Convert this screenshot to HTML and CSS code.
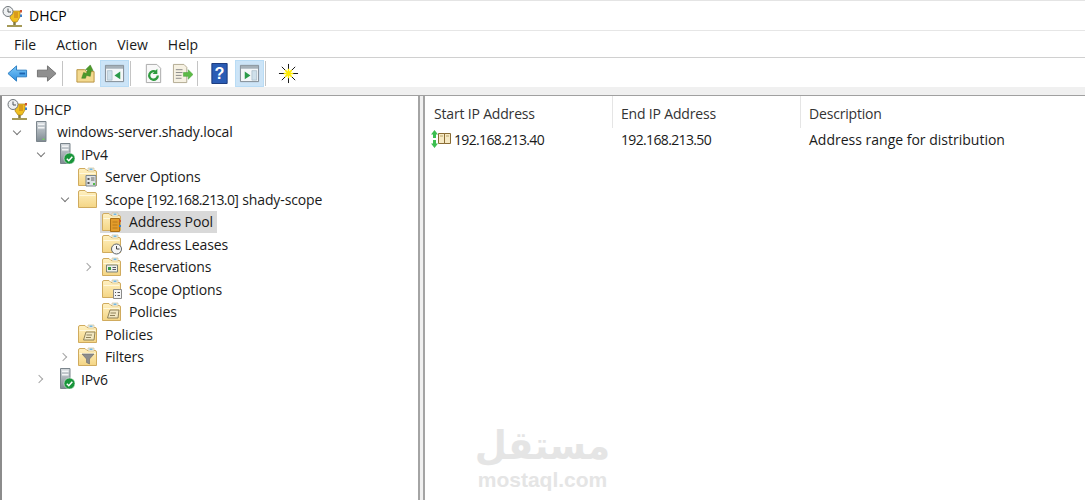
FILE: index.html
```html
<!DOCTYPE html>
<html lang="en">
  <head>
    <meta charset="UTF-8" />
    <meta name="viewport" content="width=device-width, initial-scale=1.0" />
    <title>DHCP</title>
    <link rel="stylesheet" href="styles.css">
  </head>
  <body>
    <svg class="defs" width="0" height="0">
      <defs>
        <linearGradient id="foldfill" x1="0" y1="0" x2="0" y2="1">
          <stop offset="0" stop-color="#fff1c2"/>
          <stop offset="1" stop-color="#f4d584"/>
        </linearGradient>
        <linearGradient id="towerfill" x1="0" y1="0" x2="0" y2="1">
          <stop offset="0" stop-color="#d4d9dd"/>
          <stop offset="1" stop-color="#7f8a92"/>
        </linearGradient>
        <linearGradient id="backfill" x1="0" y1="0" x2="0" y2="1">
          <stop offset="0" stop-color="#7cc8f8"/>
          <stop offset="1" stop-color="#2f8fe0"/>
        </linearGradient>
        <g id="folder">
          <path d="M.5 18.500V3q0-1.500 1.500-1.500h5l2 2h8q1.500 0 1.500 1.500v13.500z" fill="url(#foldfill)" stroke="#d0ab5e"/>
          <path d="M1.500 6.500h16" stroke="#fff8dd"/>
        </g>
        <g id="folder-tab">
          <use href="#folder"/>
          <path d="M10 1h6v3h-6z" fill="#f7f4e6" stroke="#c9b98a" stroke-width=".6"/>
          <path d="M11.500 1.500h3v1.500h-3z" fill="#6fb8e6"/>
        </g>
        <g id="tower">
          <path d="M6.500 -.5h9.500v20H6.500z" fill="url(#towerfill)" stroke="#7b858c"/>
          <path d="M8 1.500h6.500v1.500H8zM8 5h6.500v1.500H8z" fill="#f2f4f5"/>
          <path d="M8 9h6.500" stroke="#aab2b8"/>
          <path d="M12.500 16.500h2v1.500h-2z" fill="#74d45e"/>
        </g>
        <g id="tower-ok">
          <use href="#tower"/>
          <circle cx="15.500" cy="14.500" r="5.500" fill="#18953a" stroke="#fff" stroke-width=".5"/>
          <path d="M12.800 14.700l2 2 3.500-4" fill="none" stroke="#fff" stroke-width="1.500"/>
        </g>
        <g id="sheet">
          <path d="M8 8h9l-1 8H5.500z" fill="#f1e7c2" stroke="#8f825a"/>
          <path d="M8.500 11h5.500M8 13.500h5" stroke="#8f825a"/>
        </g>
        <g id="trophy">
          <path d="M9 5h9v6l-3 5h-4l-3-4z" fill="#f0c020" stroke="#a97f1c" stroke-width=".7"/>
          <path d="M12 6h4v6h-4z" fill="#d99a1c"/>
          <circle cx="6" cy="5.500" r="5" fill="#eef0f1" stroke="#6f757a"/>
          <path d="M6 2.500v3.500h3" fill="none" stroke="#4f5458"/>
          <path d="M18 4h2v2.500h-2z" fill="#d0552f"/>
          <path d="M18 8.500h2V11h-2z" fill="#3c7fc4"/>
          <path d="M12.500 16v3" stroke="#857a3c" stroke-width="2.500"/>
          <path d="M5 20h15" stroke="#a59a58" stroke-width="2"/>
        </g>
      </defs>
    </svg>

    <header class="titlebar">
      <svg class="ico" viewBox="0 0 19 20"><use href="#trophy"/></svg>
      <span>DHCP</span>
    </header>

    <nav class="menubar">
      <span>File</span>
      <span>Action</span>
      <span>View</span>
      <span>Help</span>
    </nav>

    <div class="toolbar">
      <button class="tool">
        <svg viewBox="0 0 22 22"><path d="M1 11l9-8v4.500h10.500v7H10V19z" fill="url(#backfill)" stroke="#2a7cc0"/><path d="M13 11h6" stroke="#1c64b0" stroke-width="2"/></svg>
      </button>
      <button class="tool">
        <svg viewBox="0 0 22 22"><path d="M21 11l-9-8v4.500H1.500v7H12V19z" fill="#8f8f8f" stroke="#707070"/></svg>
      </button>
      <i class="sep"></i>
      <button class="tool">
        <svg viewBox="0 0 22 22"><path d="M2 20V7h8l2 2h8v11z" fill="#f3d98f" stroke="#b8923f"/><path d="M7 16l2-6 3 1 1-4-2 0 5-5 3 6-2 0-1 6-4-1-1 3z" fill="#4c9a2a" stroke="#3a7a20" stroke-width=".5"/></svg>
      </button>
      <button class="tool on">
        <svg viewBox="0 0 22 22"><path d="M1.500 2.500h19v17h-19z" fill="#f4f7f9" stroke="#7d8790"/><path d="M2 3h18v3H2z" fill="#a5b0b8"/><path d="M3.500 8h5v10h-5z" fill="#cfe0ea" stroke="#8ea4b4" stroke-width=".5"/><path d="M17 9l-6 4 6 4z" fill="#2c9b4a"/></svg>
      </button>
      <i class="sep"></i>
      <button class="tool">
        <svg viewBox="0 0 22 22"><path d="M3.500 1.500h11l4 4v15h-15z" fill="#f8f8f8" stroke="#a8a8a8"/><path d="M15.500 13a4.500 4.500 0 1 1-2-3.700" fill="none" stroke="#2e9b3e" stroke-width="2.400"/><path d="M15 6v5.500h-5z" fill="#2e9b3e"/></svg>
      </button>
      <button class="tool slim">
        <svg viewBox="0 0 22 22"><path d="M1.500 1.500h11l3 3v16h-14z" fill="#f6f1e2" stroke="#b0a890"/><path d="M4 7h7M4 10h7M4 13h6M4 16h6" stroke="#888"/><path d="M12 10h5V7l5 5-5 5v-3h-5z" fill="#5cbb46" stroke="#3f9a30" stroke-width=".5"/></svg>
      </button>
      <i class="sep tight"></i>
      <button class="tool slim">
        <svg viewBox="0 0 22 22"><path d="M3 .5h16v21H3z" fill="#2a5cb4" stroke="#16357a"/><text x="11" y="17" class="help-mark">?</text></svg>
      </button>
      <button class="tool on shift">
        <svg viewBox="0 0 22 22"><path d="M1.500 2.500h19v17h-19z" fill="#f4f7f9" stroke="#7d8790"/><path d="M2 3h18v3H2z" fill="#a5b0b8"/><path d="M13.500 8h5v10h-5z" fill="#cfe0ea" stroke="#8ea4b4" stroke-width=".5"/><path d="M6 9l6 4-6 4z" fill="#2c9b4a"/></svg>
      </button>
      <i class="sep"></i>
      <button class="tool">
        <svg viewBox="0 0 22 22"><path d="M11 1v20M1 11h20M4 4l14 14M18 4L4 18" stroke="#111"/><path d="M11 6v10M6 11h10M7.500 7.500l7 7M14.500 7.500l-7 7" stroke="#ffec00" stroke-width="1.600"/></svg>
      </button>
    </div>

    <div class="strip"></div>

    <main class="panes">
      <section class="tree">
        <div class="node root">
          <div class="item">
            <svg class="ico" viewBox="0 0 19 20"><use href="#trophy"/></svg>
            <span class="label">DHCP</span>
          </div>
        </div>
        <div class="node d0">
          <span class="arrow open"></span>
          <div class="item">
            <svg class="ico" viewBox="0 0 19 20"><use href="#tower"/></svg>
            <span class="label">windows-server.shady.local</span>
          </div>
        </div>
        <div class="node d1">
          <span class="arrow open"></span>
          <div class="item">
            <svg class="ico" viewBox="0 0 19 20"><use href="#tower-ok"/></svg>
            <span class="label">IPv4</span>
          </div>
        </div>
        <div class="node d2">
          <span class="arrow"></span>
          <div class="item">
            <svg class="ico" viewBox="0 0 19 20">
              <use href="#folder-tab"/>
              <path d="M8 8.500h10v10.500H8z" fill="#dfe3e6" stroke="#7b858c"/>
              <path d="M9.500 11h2v2h-2zM9.500 15h2v2h-2z" fill="#555"/>
              <path d="M13 11h3.500M13 13h3.500" stroke="#666"/>
              <path d="M15 16h2v2h-2z" fill="#4fbb4a"/>
            </svg>
            <span class="label">Server Options</span>
          </div>
        </div>
        <div class="node d2">
          <span class="arrow open"></span>
          <div class="item">
            <svg class="ico" viewBox="0 0 19 20"><use href="#folder"/></svg>
            <span class="label">Scope [<span class="ip">192.168.213.0</span>] shady-scope</span>
          </div>
        </div>
        <div class="node d3">
          <span class="arrow"></span>
          <div class="item sel">
            <svg class="ico" viewBox="0 0 19 20">
              <use href="#folder-tab"/>
              <path d="M8.500 6.500h9v13h-9z" fill="#e39c2b" stroke="#a96f17"/>
              <path d="M10.500 10h5M10.500 13h5M10.500 16h5" stroke="#b97a1a"/>
              <path d="M17 8h2v2h-2z" fill="#cf5a2a"/>
              <path d="M17 13h2v2h-2z" fill="#3f80c8"/>
            </svg>
            <span class="label">Address Pool</span>
          </div>
        </div>
        <div class="node d3">
          <span class="arrow"></span>
          <div class="item">
            <svg class="ico" viewBox="0 0 19 20">
              <use href="#folder-tab"/>
              <circle cx="14.500" cy="15" r="5" fill="#f5f5f5" stroke="#5e6468"/>
              <path d="M14.500 12v3h3" fill="none" stroke="#444"/>
            </svg>
            <span class="label">Address Leases</span>
          </div>
        </div>
        <div class="node d3">
          <span class="arrow shut"></span>
          <div class="item">
            <svg class="ico" viewBox="0 0 19 20">
              <use href="#folder-tab"/>
              <path d="M4.500 8h11v7h-11z" fill="#eef0ea" stroke="#7c8278"/>
              <path d="M6 10h3v3H6z" fill="#3a9a48"/>
              <path d="M10.500 10.500h3.500M10.500 12.500h3.500" stroke="#556"/>
            </svg>
            <span class="label">Reservations</span>
          </div>
        </div>
        <div class="node d3">
          <span class="arrow"></span>
          <div class="item">
            <svg class="ico" viewBox="0 0 19 20">
              <use href="#folder-tab"/>
              <path d="M11.500 10.500h8v9h-8z" fill="#f4f4f4" stroke="#8a8a8a"/>
              <path d="M13 13.500h1M15.500 13.500h2.500M13 16.500h1M15.500 16.500h2.500" stroke="#555"/>
            </svg>
            <span class="label">Scope Options</span>
          </div>
        </div>
        <div class="node d3">
          <span class="arrow"></span>
          <div class="item">
            <svg class="ico" viewBox="0 0 19 20"><use href="#folder-tab"/><use href="#sheet"/></svg>
            <span class="label">Policies</span>
          </div>
        </div>
        <div class="node d2">
          <span class="arrow"></span>
          <div class="item">
            <svg class="ico" viewBox="0 0 19 20"><use href="#folder-tab"/><use href="#sheet"/></svg>
            <span class="label">Policies</span>
          </div>
        </div>
        <div class="node d2">
          <span class="arrow shut"></span>
          <div class="item">
            <svg class="ico" viewBox="0 0 19 20">
              <use href="#folder-tab"/>
              <path d="M4 7h12l-4.500 5v5l-3-1.500V12z" fill="#8d8d8d" stroke="#6a6a6a" stroke-width=".6"/>
            </svg>
            <span class="label">Filters</span>
          </div>
        </div>
        <div class="node d1">
          <span class="arrow shut"></span>
          <div class="item">
            <svg class="ico" viewBox="0 0 19 20"><use href="#tower-ok"/></svg>
            <span class="label">IPv6</span>
          </div>
        </div>
      </section>

      <section class="list">
        <div class="cols head">
          <div>Start IP Address</div>
          <div>End IP Address</div>
          <div>Description</div>
        </div>
        <div class="cols row">
          <div class="first">
            <svg class="range" viewBox="0 0 21 18">
              <path d="M3.500 0l3.500 4.500H5V8H2V4.500H0zM2 10h3v3.500h2L3.500 18 0 13.500h2z" fill="#3cbf50"/>
              <path d="M7.500 3.500h6v10h-6zM13.500 3.500h6v10h-6z" fill="#f6e9c4" stroke="#8a6c34"/>
              <path d="M9 6h3M15 6h3" stroke="#b9a26a"/>
            </svg>
            <span class="ip">192.168.213.40</span>
          </div>
          <div><span class="ip">192.168.213.50</span></div>
          <div class="desc">Address range for distribution</div>
        </div>
      </section>
    </main>

    <div class="mark">
      <div class="mark-ar" lang="ar" dir="rtl">مستقل</div>
      <div class="mark-en">mostaql.com</div>
    </div>
  </body>
</html>
```

FILE: styles.css
```css
* {
  box-sizing: border-box;
}

html,
body {
  height: 100%;
}

body {
  margin: 0;
  display: flex;
  flex-direction: column;
  overflow: hidden;
  background: #fff;
  color: #1a1a1a;
  font-family: "Open Sans", "Noto Sans", sans-serif;
  font-size: 14px;
}

.defs {
  position: absolute;
}

.titlebar {
  height: 31px;
  display: flex;
  align-items: center;
  gap: 8px;
  padding-left: 2px;
  border-top: 1px solid #e4e4e4;
  border-bottom: 1px solid #e6e6e6;
  color: #000;
}

.menubar {
  height: 27px;
  display: flex;
  align-items: center;
  gap: 20px;
  padding-left: 14px;
  border-bottom: 1px solid #d0d0d0;
}

.toolbar {
  height: 29px;
  display: flex;
  align-items: flex-end;
  padding-left: 3px;
  background: #fff;
}

.tool {
  width: 29px;
  height: 27px;
  padding: 0;
  border: 1px solid transparent;
  background: none;
  display: flex;
  align-items: center;
  justify-content: center;
}

.tool.slim {
  width: 28px;
}

.tool.on {
  background: #cce4f7;
  border-color: #b9dcf5;
}

.tool.shift {
  margin-left: 2px;
}

.tool svg {
  width: 21px;
  height: 21px;
}

.help-mark {
  fill: #fff;
  font-size: 17px;
  font-weight: 700;
  text-anchor: middle;
}

.sep {
  width: 1px;
  height: 25px;
  margin: 0 8px 1px 1px;
  background: #c4c4c4;
}

.sep.tight {
  margin-right: 7px;
}

.strip {
  height: 9px;
  background: #f0f0f0;
  border-bottom: 1px solid #a0a0a0;
}

.panes {
  flex: 1;
  display: flex;
  min-height: 0;
  background: #f0f0f0;
  border-left: 2px solid #8c8c8c;
}

.tree {
  width: 418px;
  background: #fff;
  border-right: 2px solid #a4a4a4;
  padding-top: 2px;
  letter-spacing: -0.12px;
}

.node {
  height: 22.5px;
  display: flex;
  align-items: stretch;
}

.root { padding-left: 3px; }
.d0 { padding-left: 8px; }
.d1 { padding-left: 32px; }
.d2 { padding-left: 56px; }
.d3 { padding-left: 80px; }

.arrow {
  width: 14px;
  margin-right: 4px;
  flex: none;
  position: relative;
}

.arrow.open::after,
.arrow.shut::after {
  content: "";
  position: absolute;
  left: 4px;
  top: 7px;
  width: 5px;
  height: 5px;
  border-right: 1px solid #777;
  border-bottom: 1px solid #777;
  transform: rotate(45deg);
}

.arrow.shut::after {
  left: 2px;
  top: 8px;
  border-color: #a6a6a6;
  transform: rotate(-45deg);
}

.item {
  display: flex;
  align-items: center;
  padding: 0 4px 0 2px;
}

.sel {
  background: #d9d9d9;
}

.ico {
  width: 19px;
  height: 20px;
  flex: none;
  overflow: visible;
}

.label {
  margin-left: 8px;
  white-space: nowrap;
}

.ip {
  letter-spacing: -0.65px;
}

.list {
  flex: 1;
  margin-left: 3px;
  background: #fff;
  border-left: 2px solid #a4a4a4;
}

.cols {
  display: grid;
  grid-template-columns: 188px 188px 1fr;
}

.head {
  height: 32px;
  letter-spacing: -0.18px;
}

.head div {
  padding: 8px 8px 0;
  border-right: 1px solid #e5e5e5;
  color: #333;
}

.head div:first-child {
  padding-left: 9px;
}

.head div:last-child {
  border-right: 0;
}

.row {
  height: 22px;
  align-items: center;
}

.row div {
  padding-left: 8px;
}

.row .first {
  padding-left: 6px;
  display: flex;
  align-items: center;
  gap: 2px;
}

.range {
  width: 21px;
  height: 18px;
  flex: none;
}

.mark {
  position: absolute;
  left: 470px;
  top: 423px;
  width: 145px;
  text-align: center;
  color: #e5e5e5;
  pointer-events: none;
}

.mark-ar {
  font-family: "DejaVu Sans", sans-serif;
  font-size: 37px;
  font-weight: 700;
  line-height: 46px;
  transform: scaleY(1.05);
}

.mark-en {
  font-family: "Liberation Sans", sans-serif;
  font-size: 21px;
  font-weight: 700;
  line-height: 22px;
}
```
